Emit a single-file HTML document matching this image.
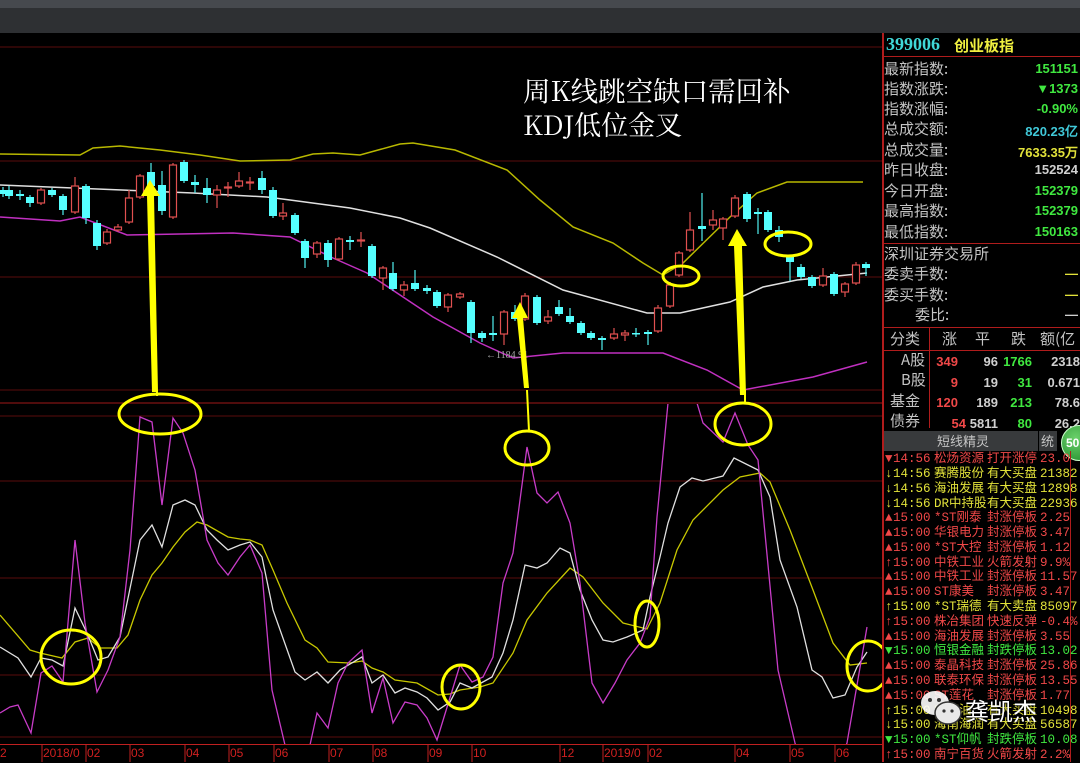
<!DOCTYPE html>
<html><head><meta charset="utf-8"><style>
*{margin:0;padding:0;box-sizing:border-box}
body{width:1080px;height:762px;overflow:hidden;background:#000;position:relative;font-family:"Liberation Sans","Noto Sans CJK SC",sans-serif}
.a{position:absolute;white-space:nowrap}
.lb{color:#c4c4c4;font-size:15px;font-family:"Noto Sans CJK SC",sans-serif;line-height:20px}
.v{font-size:13px;font-weight:bold;right:2px;font-family:"Liberation Sans",sans-serif}
.r{color:#f04848}.y{color:#e2e23a}.g{color:#40e840}.w{color:#d0d0d0}
.row{position:absolute;left:884px;height:15px;font-size:12.5px;line-height:15px;width:196px;white-space:nowrap;font-family:"Liberation Mono","Noto Sans CJK SC",monospace}
.row span{position:absolute}
</style></head><body>
<div class="a" style="left:0;top:0;width:1080px;height:8px;background:#46494e"></div>
<div class="a" style="left:0;top:8px;width:1080px;height:25px;background:#2e3033"></div>

<svg class="a" style="left:0;top:0" width="882" height="762" viewBox="0 0 882 762">
<g stroke="#5a0c0c" stroke-width="1">
<line x1="0" y1="47" x2="882" y2="47"/><line x1="0" y1="161" x2="882" y2="161"/><line x1="0" y1="277" x2="882" y2="277"/><line x1="0" y1="390" x2="882" y2="390"/>
<line x1="0" y1="416" x2="882" y2="416"/><line x1="0" y1="481" x2="882" y2="481"/><line x1="0" y1="578" x2="882" y2="578"/><line x1="0" y1="675" x2="882" y2="675"/><line x1="0" y1="737" x2="882" y2="737"/>
</g>
<line x1="0" y1="403" x2="882" y2="403" stroke="#a01818"/>
<line x1="0" y1="744.5" x2="882" y2="744.5" stroke="#c02020"/>
<polyline fill="none" stroke="#b8b800" stroke-width="1.5" points="0,154 80,155 93,148 120,146 160,150 200,155 240,161 290,160 313,154 333,153 360,155 400,144 413,143 455,150 507,170 540,200 573,227 613,243 643,263 663,275 683,263 730,217 757,193 787,182 863,182"/>
<polyline fill="none" stroke="#e0e0e0" stroke-width="1.5" points="0,185 193,193 267,197 290,200 350,208 400,218 430,228 497,257 563,290 647,313 680,313 730,302 763,287 797,280 867,273"/>
<polyline fill="none" stroke="#c030c0" stroke-width="1.5" points="0,217 60,221 80,217 127,235 233,233 290,237 333,258 367,273 433,317 480,343 513,358 563,353 663,353 707,370 743,390 813,377 867,362"/>
<g stroke="#50f0f0" stroke-width="1.2">
<line x1="3" y1="187" x2="3" y2="197"/><line x1="9" y1="186" x2="9" y2="199"/><line x1="20" y1="190" x2="20" y2="200"/><line x1="30" y1="195" x2="30" y2="207"/><line x1="52" y1="188" x2="52" y2="197"/><line x1="63" y1="194" x2="63" y2="215"/><line x1="86" y1="184" x2="86" y2="224"/><line x1="97" y1="220" x2="97" y2="250"/><line x1="151" y1="163" x2="151" y2="188"/><line x1="162" y1="171" x2="162" y2="215"/><line x1="184" y1="160" x2="184" y2="183"/><line x1="195" y1="175" x2="195" y2="193"/><line x1="207" y1="178" x2="207" y2="203"/><line x1="262" y1="171" x2="262" y2="194"/><line x1="273" y1="187" x2="273" y2="218"/><line x1="295" y1="213" x2="295" y2="235"/><line x1="305" y1="239" x2="305" y2="268"/><line x1="328" y1="240" x2="328" y2="267"/><line x1="350" y1="236" x2="350" y2="250"/><line x1="372" y1="244" x2="372" y2="278"/><line x1="393" y1="262" x2="393" y2="291"/><line x1="415" y1="270" x2="415" y2="291"/><line x1="427" y1="285" x2="427" y2="294"/><line x1="437" y1="290" x2="437" y2="308"/><line x1="471" y1="300" x2="471" y2="343"/><line x1="482" y1="331" x2="482" y2="342"/><line x1="493" y1="316" x2="493" y2="341"/><line x1="515" y1="305" x2="515" y2="321"/><line x1="537" y1="295" x2="537" y2="325"/><line x1="559" y1="300" x2="559" y2="316"/><line x1="570" y1="308" x2="570" y2="324"/><line x1="581" y1="321" x2="581" y2="335"/><line x1="591" y1="331" x2="591" y2="340"/><line x1="602" y1="336" x2="602" y2="350"/><line x1="636" y1="328" x2="636" y2="337"/><line x1="648" y1="330" x2="648" y2="345"/><line x1="702" y1="193" x2="702" y2="241"/><line x1="747" y1="192" x2="747" y2="222"/><line x1="758" y1="208" x2="758" y2="234"/><line x1="768" y1="210" x2="768" y2="232"/><line x1="779" y1="226" x2="779" y2="242"/><line x1="790" y1="255" x2="790" y2="281"/><line x1="801" y1="264" x2="801" y2="279"/><line x1="812" y1="275" x2="812" y2="288"/><line x1="834" y1="272" x2="834" y2="296"/><line x1="866" y1="262" x2="866" y2="276"/>
</g>
<g fill="#55ffff">
<rect x="-1" y="190" width="8" height="4"/><rect x="5" y="190" width="8" height="6"/><rect x="16" y="194" width="8" height="2"/><rect x="26" y="197" width="8" height="6"/><rect x="48" y="190" width="8" height="5"/><rect x="59" y="196" width="8" height="14"/><rect x="82" y="186" width="8" height="32"/><rect x="93" y="223" width="8" height="23"/><rect x="147" y="172" width="8" height="14"/><rect x="158" y="185" width="8" height="26"/><rect x="180" y="162" width="8" height="19"/><rect x="191" y="182" width="8" height="3"/><rect x="203" y="188" width="8" height="7"/><rect x="258" y="178" width="8" height="12"/><rect x="269" y="190" width="8" height="26"/><rect x="291" y="215" width="8" height="18"/><rect x="301" y="241" width="8" height="17"/><rect x="324" y="243" width="8" height="17"/><rect x="346" y="240" width="8" height="2"/><rect x="368" y="246" width="8" height="30"/><rect x="389" y="273" width="8" height="16"/><rect x="411" y="283" width="8" height="6"/><rect x="423" y="288" width="8" height="3"/><rect x="433" y="292" width="8" height="14"/><rect x="467" y="302" width="8" height="31"/><rect x="478" y="333" width="8" height="5"/><rect x="489" y="333" width="8" height="2"/><rect x="511" y="312" width="8" height="7"/><rect x="533" y="297" width="8" height="26"/><rect x="555" y="307" width="8" height="7"/><rect x="566" y="316" width="8" height="6"/><rect x="577" y="323" width="8" height="10"/><rect x="587" y="333" width="8" height="5"/><rect x="598" y="338" width="8" height="2"/><rect x="632" y="333" width="8" height="1.5"/><rect x="644" y="332" width="8" height="2"/><rect x="698" y="226" width="8" height="3"/><rect x="743" y="194" width="8" height="25"/><rect x="754" y="212" width="8" height="2"/><rect x="764" y="212" width="8" height="18"/><rect x="775" y="230" width="8" height="7"/><rect x="786" y="257" width="8" height="5"/><rect x="797" y="267" width="8" height="10"/><rect x="808" y="277" width="8" height="9"/><rect x="830" y="274" width="8" height="20"/><rect x="862" y="264" width="8" height="4"/>
</g>
<g stroke="#e05050" stroke-width="1.2">
<line x1="41" y1="188" x2="41" y2="205"/><line x1="75" y1="177" x2="75" y2="214"/><line x1="107" y1="229" x2="107" y2="245"/><line x1="118" y1="224" x2="118" y2="232"/><line x1="129" y1="190" x2="129" y2="224"/><line x1="140" y1="174" x2="140" y2="199"/><line x1="173" y1="163" x2="173" y2="219"/><line x1="217" y1="185" x2="217" y2="208"/><line x1="228" y1="182" x2="228" y2="197"/><line x1="239" y1="172" x2="239" y2="188"/><line x1="250" y1="177" x2="250" y2="190"/><line x1="283" y1="203" x2="283" y2="220"/><line x1="317" y1="241" x2="317" y2="258"/><line x1="339" y1="237" x2="339" y2="261"/><line x1="361" y1="232" x2="361" y2="247"/><line x1="383" y1="266" x2="383" y2="290"/><line x1="404" y1="281" x2="404" y2="296"/><line x1="448" y1="293" x2="448" y2="312"/><line x1="460" y1="292" x2="460" y2="299"/><line x1="504" y1="310" x2="504" y2="345"/><line x1="525" y1="293" x2="525" y2="321"/><line x1="548" y1="310" x2="548" y2="324"/><line x1="614" y1="328" x2="614" y2="340"/><line x1="625" y1="330" x2="625" y2="341"/><line x1="658" y1="305" x2="658" y2="333"/><line x1="670" y1="282" x2="670" y2="308"/><line x1="679" y1="251" x2="679" y2="277"/><line x1="690" y1="212" x2="690" y2="252"/><line x1="713" y1="210" x2="713" y2="230"/><line x1="723" y1="217" x2="723" y2="240"/><line x1="735" y1="195" x2="735" y2="218"/><line x1="823" y1="268" x2="823" y2="287"/><line x1="845" y1="282" x2="845" y2="297"/><line x1="856" y1="262" x2="856" y2="285"/>
</g>
<g stroke="#e05050" stroke-width="1.2" fill="#000">
<rect x="37.5" y="190" width="7" height="13"/><rect x="71.5" y="186" width="7" height="26"/><rect x="103.5" y="232" width="7" height="11"/><rect x="114.5" y="227" width="7" height="3"/><rect x="125.5" y="198" width="7" height="24"/><rect x="136.5" y="176" width="7" height="21"/><rect x="169.5" y="165" width="7" height="52"/><rect x="213.5" y="190" width="7" height="5"/><rect x="224.5" y="187" width="7" height="1"/><rect x="235.5" y="181" width="7" height="5"/><rect x="246.5" y="182" width="7" height="1"/><rect x="279.5" y="213" width="7" height="3"/><rect x="313.5" y="243" width="7" height="11"/><rect x="335.5" y="239" width="7" height="20"/><rect x="357.5" y="240" width="7" height="1"/><rect x="379.5" y="268" width="7" height="10"/><rect x="400.5" y="285" width="7" height="5"/><rect x="444.5" y="295" width="7" height="12"/><rect x="456.5" y="294" width="7" height="3"/><rect x="500.5" y="312" width="7" height="22"/><rect x="521.5" y="296" width="7" height="23"/><rect x="544.5" y="317" width="7" height="4"/><rect x="610.5" y="334" width="7" height="4"/><rect x="621.5" y="333" width="7" height="2"/><rect x="654.5" y="308" width="7" height="23"/><rect x="666.5" y="285" width="7" height="21"/><rect x="675.5" y="253" width="7" height="22"/><rect x="686.5" y="230" width="7" height="20"/><rect x="709.5" y="220" width="7" height="5"/><rect x="719.5" y="219" width="7" height="9"/><rect x="731.5" y="198" width="7" height="18"/><rect x="819.5" y="276" width="7" height="9"/><rect x="841.5" y="284" width="7" height="8"/><rect x="852.5" y="265" width="7" height="18"/>
</g>
<text x="486" y="358" fill="#a8a8a8" font-size="10" font-family="Liberation Serif,serif">←1184.91</text>
<defs><clipPath id="kc"><rect x="0" y="404" width="882" height="340"/></clipPath></defs>
<g clip-path="url(#kc)" fill="none" stroke-width="1.3">
<polyline stroke="#c8c800" points="0,615 30,650 40,653 62,658 75,642 88,638 100,648 117,648 128,635 140,600 152,575 162,563 173,547 185,532 197,522 207,525 228,537 240,539 250,540 262,545 273,570 287,603 305,640 317,648 328,662 350,663 362,661 372,668 383,672 395,680 417,683 438,695 450,694 460,690 480,687 493,683 513,653 527,620 547,593 570,568 583,577 603,603 623,623 647,629 660,603 677,550 693,520 723,490 740,477 760,473 770,482 790,530 813,590 833,643 850,665 867,663"/>
<polyline stroke="#e0e0e0" points="0,647 18,658 31,677 41,658 52,660 63,666 75,608 87,633 98,660 108,657 120,637 140,540 152,525 162,547 173,505 185,500 195,505 207,530 217,540 228,550 240,545 250,542 262,557 273,610 295,672 305,680 317,672 328,683 340,670 362,657 372,683 383,675 395,693 405,688 417,692 427,698 438,710 450,702 460,683 472,688 492,677 503,653 513,620 525,565 537,568 547,563 560,548 570,553 580,590 592,620 603,640 613,642 627,637 643,630 650,597 660,557 668,523 680,487 692,478 703,481 723,476 734,458 748,465 758,470 770,497 780,560 797,607 812,670 822,677 833,698 845,695 857,667 867,652"/>
<polyline stroke="#c83cc8" points="0,713 10,707 18,705 31,733 41,673 52,666 63,682 75,540 85,623 97,692 108,670 120,637 130,550 140,417 152,422 162,505 173,418 183,433 195,470 207,540 218,563 228,575 240,557 250,545 262,573 272,690 285,745 305,760 310,745 317,713 328,728 338,683 348,663 362,650 372,713 383,678 393,723 405,702 417,705 427,718 437,740 460,665 472,682 483,677 493,657 503,583 513,553 527,447 537,493 547,503 558,492 570,523 580,583 592,683 603,703 615,683 627,660 640,643 650,617 657,517 668,403 680,360 697,380 697,403 703,423 723,442 735,413 748,445 758,460 778,670 795,743 800,760 840,760 847,743 867,627"/>
</g>
<g fill="#d02020" font-size="12" font-family="Liberation Sans,sans-serif">
<text x="0" y="757">2</text><text x="43" y="757">2018/0</text><text x="87" y="757">02</text><text x="131" y="757">03</text><text x="186" y="757">04</text><text x="230" y="757">05</text><text x="275" y="757">06</text><text x="330" y="757">07</text><text x="374" y="757">08</text><text x="429" y="757">09</text><text x="473" y="757">10</text><text x="561" y="757">12</text><text x="604" y="757">2019/0</text><text x="649" y="757">02</text><text x="736" y="757">04</text><text x="791" y="757">05</text><text x="836" y="757">06</text>
</g>
<g stroke="#c02020"><line x1="42" y1="745" x2="42" y2="762"/><line x1="86" y1="745" x2="86" y2="762"/><line x1="130" y1="745" x2="130" y2="762"/><line x1="185" y1="745" x2="185" y2="762"/><line x1="229" y1="745" x2="229" y2="762"/><line x1="274" y1="745" x2="274" y2="762"/><line x1="329" y1="745" x2="329" y2="762"/><line x1="373" y1="745" x2="373" y2="762"/><line x1="428" y1="745" x2="428" y2="762"/><line x1="472" y1="745" x2="472" y2="762"/><line x1="560" y1="745" x2="560" y2="762"/><line x1="603" y1="745" x2="603" y2="762"/><line x1="648" y1="745" x2="648" y2="762"/><line x1="735" y1="745" x2="735" y2="762"/><line x1="790" y1="745" x2="790" y2="762"/><line x1="835" y1="745" x2="835" y2="762"/></g>
<g fill="#ffff00" stroke="none">
<polygon points="152,392 158,392 154,196 160,196 150,180 141,196 147,196"/>
<polygon points="524,388 529,388 523,318 528,318 520,302 512,318 517,318"/>
<polygon points="740,395 746,395 742,246 747,246 737,229 728,246 734,246"/>
</g>
<g stroke="#ffff00" stroke-width="2"><line x1="157" y1="390" x2="157" y2="396"/><line x1="527" y1="390" x2="529" y2="431"/><line x1="745" y1="390" x2="745" y2="404"/></g>
<g fill="none" stroke="#ffff00" stroke-width="3">
<ellipse cx="160" cy="414" rx="41" ry="20"/><ellipse cx="527" cy="448" rx="22" ry="17"/><ellipse cx="743" cy="424" rx="28" ry="21"/><ellipse cx="71" cy="657" rx="30" ry="27"/><ellipse cx="461" cy="687" rx="19" ry="22"/><ellipse cx="647" cy="624" rx="12" ry="23"/><ellipse cx="868" cy="666" rx="21" ry="25"/><ellipse cx="681" cy="276" rx="18" ry="10"/><ellipse cx="788" cy="244" rx="23" ry="12"/>
</g>
<text x="523" y="101" fill="#fff" font-size="27.5" font-family="Noto Serif CJK SC,serif">周K线跳空缺口需回补</text>
<text x="523" y="135" fill="#fff" font-size="27" font-family="Noto Serif CJK SC,serif">KDJ低位金叉</text>
</svg>

<div class="a" style="left:882px;top:33px;width:2px;height:729px;background:#b01c1c"></div>
<div class="a" style="left:886px;top:34px;font-size:18px;font-weight:bold;color:#40d8d8;font-family:'Liberation Serif',serif">399006</div>
<div class="a" style="left:954px;top:35px;font-size:15px;font-weight:bold;color:#f0f040;font-family:'Noto Sans CJK SC',sans-serif">创业板指</div>
<div class="a" style="left:884px;top:56px;width:196px;height:1px;background:#b01c1c"></div>
<div class="a lb" style="left:884px;top:59px">最新指数:</div><div class="a v g" style="top:61px">151151</div>
<div class="a lb" style="left:884px;top:79px">指数涨跌:</div><div class="a v g" style="top:81px">▼1373</div>
<div class="a lb" style="left:884px;top:99px">指数涨幅:</div><div class="a v g" style="top:101px">-0.90%</div>
<div class="a lb" style="left:884px;top:119px">总成交额:</div><div class="a v" style="top:121px;color:#40c8d8">820.23亿</div>
<div class="a lb" style="left:884px;top:140px">总成交量:</div><div class="a v y" style="top:142px">7633.35万</div>
<div class="a lb" style="left:884px;top:160px">昨日收盘:</div><div class="a v w" style="top:162px">152524</div>
<div class="a lb" style="left:884px;top:181px">今日开盘:</div><div class="a v g" style="top:183px">152379</div>
<div class="a lb" style="left:884px;top:201px">最高指数:</div><div class="a v g" style="top:203px">152379</div>
<div class="a lb" style="left:884px;top:222px">最低指数:</div><div class="a v g" style="top:224px">150163</div>
<div class="a" style="left:884px;top:243px;width:196px;height:1px;background:#b01c1c"></div>
<div class="a lb" style="left:884px;top:244px">深圳证券交易所</div>
<div class="a lb" style="left:884px;top:264px">委卖手数:</div><div class="a v y" style="top:266px">—</div>
<div class="a lb" style="left:884px;top:285px">委买手数:</div><div class="a v y" style="top:287px">—</div>
<div class="a lb" style="left:915px;top:305px">委比:</div><div class="a v w" style="top:307px">—</div>
<div class="a" style="left:884px;top:327px;width:196px;height:1px;background:#b01c1c"></div>
<div class="a" style="left:929px;top:328px;width:1px;height:100px;background:#b01c1c"></div>
<div class="a lb" style="left:890px;top:329px">分类</div>
<div class="a lb" style="left:942px;top:329px">涨</div><div class="a lb" style="left:975px;top:329px">平</div><div class="a lb" style="left:1011px;top:329px">跌</div><div class="a lb" style="left:1040px;top:329px">额(亿</div>
<div class="a" style="left:884px;top:350px;width:196px;height:1px;background:#b01c1c"></div>
<div class="a lb" style="left:901px;top:350px">A股</div><div class="a lb" style="left:901px;top:370px">B股</div><div class="a lb" style="left:890px;top:391px">基金</div><div class="a lb" style="left:890px;top:411px">债券</div>
<div class="a" style="left:932px;top:352px;width:148px;font-size:13px;font-weight:bold;line-height:20.5px">
<div style="position:relative;height:20.5px"><span class="a r" style="right:122px">349</span><span class="a w" style="right:82px">96</span><span class="a g" style="right:48px">1766</span><span class="a w" style="right:0">2318</span></div>
<div style="position:relative;height:20.5px"><span class="a r" style="right:122px">9</span><span class="a w" style="right:82px">19</span><span class="a g" style="right:48px">31</span><span class="a w" style="right:0">0.671</span></div>
<div style="position:relative;height:20.5px"><span class="a r" style="right:122px">120</span><span class="a w" style="right:82px">189</span><span class="a g" style="right:48px">213</span><span class="a w" style="right:0">78.6</span></div>
<div style="position:relative;height:20.5px"><span class="a r" style="right:114px">54</span><span class="a w" style="right:82px">5811</span><span class="a g" style="right:48px">80</span><span class="a w" style="right:0">26.2</span></div>
</div>
<div class="a" style="left:884px;top:431px;width:154px;height:20px;background:#383a3c"></div>
<div class="a lb" style="left:937px;top:431px;font-size:13px">短线精灵</div>
<div class="a" style="left:1039px;top:431px;width:18px;height:20px;background:#383a3c"></div>
<div class="a lb" style="left:1041px;top:431px;font-size:13px">统</div>
<div class="a" style="left:1061px;top:425px;width:36px;height:36px;border-radius:50%;background:radial-gradient(circle at 40% 35%,#6ad06a,#1f8a2a);border:1px solid #cfc"></div>
<div class="a" style="left:1066px;top:436px;color:#fff;font-size:12px;font-weight:bold">50</div>
<div class="a" style="left:1070px;top:451px;width:1px;height:311px;background:#b01c1c"></div>

<div class="row r" style="top:452px"><span style="left:1px">▼</span><span style="left:9px">14:56</span><span style="left:50px">松炀资源</span><span style="left:103px">打开涨停</span><span style="left:156px">23.0</span></div>
<div class="row y" style="top:467px"><span style="left:1px">↓</span><span style="left:9px">14:56</span><span style="left:50px">赛腾股份</span><span style="left:103px">有大买盘</span><span style="left:156px">21382</span></div>
<div class="row y" style="top:482px"><span style="left:1px">↓</span><span style="left:9px">14:56</span><span style="left:50px">海油发展</span><span style="left:103px">有大买盘</span><span style="left:156px">12898</span></div>
<div class="row y" style="top:497px"><span style="left:1px">↓</span><span style="left:9px">14:56</span><span style="left:50px">DR中持股</span><span style="left:103px">有大买盘</span><span style="left:156px">22936</span></div>
<div class="row r" style="top:511px"><span style="left:1px">▲</span><span style="left:9px">15:00</span><span style="left:50px">*ST刚泰</span><span style="left:103px">封涨停板</span><span style="left:156px">2.25</span></div>
<div class="row r" style="top:526px"><span style="left:1px">▲</span><span style="left:9px">15:00</span><span style="left:50px">华银电力</span><span style="left:103px">封涨停板</span><span style="left:156px">3.47</span></div>
<div class="row r" style="top:541px"><span style="left:1px">▲</span><span style="left:9px">15:00</span><span style="left:50px">*ST大控</span><span style="left:103px">封涨停板</span><span style="left:156px">1.12</span></div>
<div class="row r" style="top:556px"><span style="left:1px">↑</span><span style="left:9px">15:00</span><span style="left:50px">中铁工业</span><span style="left:103px">火箭发射</span><span style="left:156px">9.9%</span></div>
<div class="row r" style="top:570px"><span style="left:1px">▲</span><span style="left:9px">15:00</span><span style="left:50px">中铁工业</span><span style="left:103px">封涨停板</span><span style="left:156px">11.57</span></div>
<div class="row r" style="top:585px"><span style="left:1px">▲</span><span style="left:9px">15:00</span><span style="left:50px">ST康美</span><span style="left:103px">封涨停板</span><span style="left:156px">3.47</span></div>
<div class="row y" style="top:600px"><span style="left:1px">↑</span><span style="left:9px">15:00</span><span style="left:50px">*ST瑞德</span><span style="left:103px">有大卖盘</span><span style="left:156px">85097</span></div>
<div class="row r" style="top:615px"><span style="left:1px">↑</span><span style="left:9px">15:00</span><span style="left:50px">株冶集团</span><span style="left:103px">快速反弹</span><span style="left:156px">-0.4%</span></div>
<div class="row r" style="top:630px"><span style="left:1px">▲</span><span style="left:9px">15:00</span><span style="left:50px">海油发展</span><span style="left:103px">封涨停板</span><span style="left:156px">3.55</span></div>
<div class="row g" style="top:644px"><span style="left:1px">▼</span><span style="left:9px">15:00</span><span style="left:50px">恒银金融</span><span style="left:103px">封跌停板</span><span style="left:156px">13.02</span></div>
<div class="row r" style="top:659px"><span style="left:1px">▲</span><span style="left:9px">15:00</span><span style="left:50px">泰晶科技</span><span style="left:103px">封涨停板</span><span style="left:156px">25.86</span></div>
<div class="row r" style="top:674px"><span style="left:1px">▲</span><span style="left:9px">15:00</span><span style="left:50px">联泰环保</span><span style="left:103px">封涨停板</span><span style="left:156px">13.55</span></div>
<div class="row r" style="top:689px"><span style="left:1px">▲</span><span style="left:9px">15:00</span><span style="left:50px">ST莲花</span><span style="left:103px">封涨停板</span><span style="left:156px">1.77</span></div>
<div class="row y" style="top:704px"><span style="left:1px">↑</span><span style="left:9px">15:00</span><span style="left:50px">中海油</span><span style="left:103px">有大买盘</span><span style="left:156px">10498</span></div>
<div class="row y" style="top:718px"><span style="left:1px">↓</span><span style="left:9px">15:00</span><span style="left:50px">海南海润</span><span style="left:103px">有大买盘</span><span style="left:156px">56587</span></div>
<div class="row g" style="top:733px"><span style="left:1px">▼</span><span style="left:9px">15:00</span><span style="left:50px">*ST仰帆</span><span style="left:103px">封跌停板</span><span style="left:156px">10.08</span></div>
<div class="row r" style="top:748px"><span style="left:1px">↑</span><span style="left:9px">15:00</span><span style="left:50px">南宁百货</span><span style="left:103px">火箭发射</span><span style="left:156px">2.2%</span></div>

<svg class="a" style="left:918px;top:688px" width="48" height="40" viewBox="0 0 48 40">
<ellipse cx="17" cy="15" rx="14" ry="12" fill="#fff" opacity="0.9"/>
<ellipse cx="30" cy="25" rx="13" ry="11" fill="#e8e8e8" stroke="#333" stroke-width="1.5"/>
<circle cx="12" cy="12" r="2" fill="#333"/><circle cx="21" cy="12" r="2" fill="#333"/>
<circle cx="26" cy="23" r="1.6" fill="#333"/><circle cx="34" cy="23" r="1.6" fill="#333"/>
</svg>
<div class="a" style="left:965px;top:692px;color:#fff;font-size:24px;font-family:'Noto Sans CJK SC',sans-serif;text-shadow:0 0 2px #000">龚凯杰</div>
</body></html>
